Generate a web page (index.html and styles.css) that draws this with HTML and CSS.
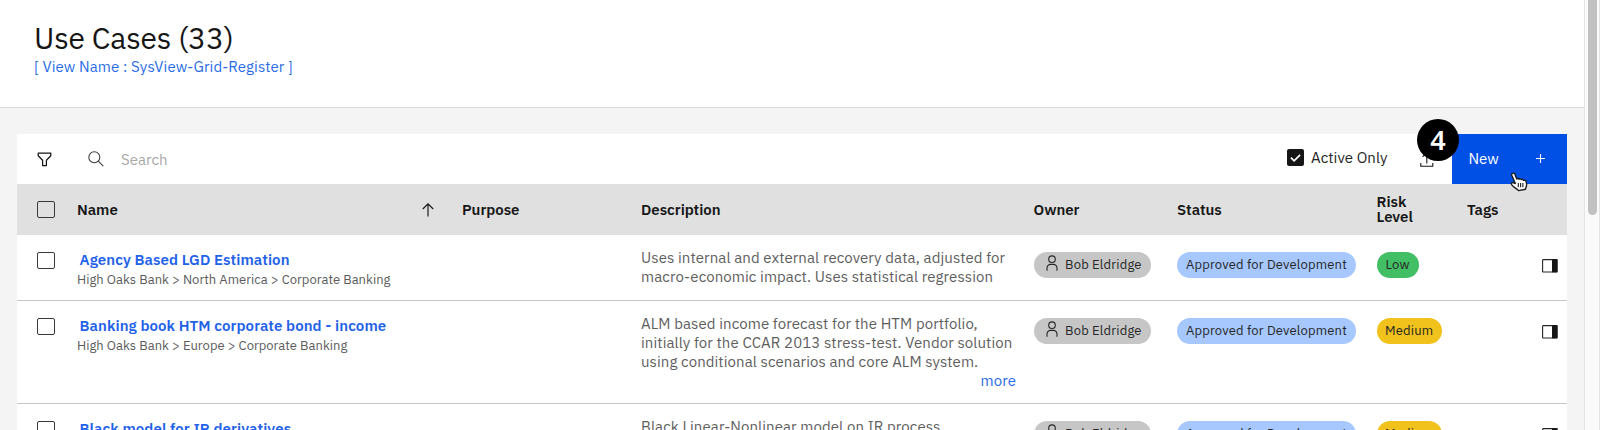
FILE: index.html
```html
<!DOCTYPE html>
<html lang="en">
<head>
<meta charset="utf-8">
<title>Use Cases</title>
<link rel="stylesheet" href="styles.css">
</head>
<body>
<svg class="defs" width="0" height="0">
  <symbol id="user" viewBox="0 0 12 16"><g fill="none" stroke="#262626" stroke-width="1.1"><circle cx="6" cy="4.2" r="3.3"/><path d="M1 15.800V13a3.600 3.600 0 0 1 3.600-3.600h2.800A3.600 3.600 0 0 1 11 13v2.800"/></g></symbol>
  <symbol id="panel" viewBox="0 0 16 14"><rect x=".6" y=".6" width="14.4" height="12.4" rx=".6" fill="#fff" stroke="#262626" stroke-width="1.1"/><path d="M10 .3h5.500v13H10z" fill="#161616"/></symbol>
</svg>
<div class="app">
  <div class="main">
    <header class="page-head">
      <h1>Use Cases (33)</h1>
      <a class="view">[ View Name : SysView-Grid-Register ]</a>
    </header>
    <section class="card">
      <div class="toolbar">
        <svg class="filter" width="15" height="15" viewBox="0 0 15 15"><path d="M1.200 1.200h12.600v2.500L9.400 8.200v5.300H5.600V8.200L1.200 3.700z" fill="none" stroke="#161616" stroke-width="1.250" stroke-linejoin="round"/></svg>
        <svg class="glass" width="16" height="16" viewBox="0 0 16 16"><g fill="none" stroke="#393939" stroke-width="1.050"><circle cx="6.300" cy="6.200" r="5.500"/><path d="M10.300 10.100l5 5"/></g></svg>
        <span class="search">Search</span>
        <span class="checked"><svg width="17" height="17" viewBox="0 0 17 17"><path d="M3.900 8.700l3.200 3.100 6-6" fill="none" stroke="#fff" stroke-width="1.700"/></svg></span>
        <span class="active">Active Only</span>
        <svg class="upload" width="14" height="16" viewBox="0 0 14 16"><path d="M.8 12v3.200h12V12M6.800 12.500V1.500M2.500 5.800l4.300-4.300 4.300 4.300" fill="none" stroke="#161616" stroke-width="1.100"/></svg>
        <button class="new"><span>New</span><svg width="9" height="9" viewBox="0 0 9 9"><path d="M4.500 0v9M0 4.500h9" stroke="#fff" stroke-width="1.100"/></svg></button>
        <span class="badge">4</span>
        <svg class="cursor" width="18" height="20" viewBox="0 0 18 20"><path d="M2.600 1.300c1-.5 1.900 0 2.300 1l1.900 4.600c.7-.6 1.700-.5 2.200.3.700-.6 1.800-.5 2.200.3.900-.4 1.900 0 2.300.9l.3-.1c1-.4 1.900.1 2.200 1 .6 1.700.8 3.300.4 4.900-.3 1.200-.8 2-.9 3l-7 1.400c-1-1.400-2.300-1.900-3.800-2.900-1.300-.9-2.700-2-3.300-3.400-.4-1.100.6-1.900 1.700-1.600l2.200.9L1.800 3.200c-.3-.8 0-1.600.8-1.900z" fill="#fff" stroke="#1c1c1c" stroke-width="1.400" stroke-linejoin="round"/><path d="M8.300 11v4.200M10.600 11v4.200M12.900 11v4.200" stroke="#1c1c1c" stroke-width="1.100"/></svg>
      </div>
      <div class="row head">
        <span class="check"></span>
        <div class="name-head"><span class="h">Name</span><svg width="12" height="14" viewBox="0 0 12 14"><path d="M6 13.500V1M.8 6L6 .9 11.200 6" fill="none" stroke="#161616" stroke-width="1.150"/></svg></div>
        <span class="h">Purpose</span>
        <span class="h">Description</span>
        <span class="h">Owner</span>
        <span class="h">Status</span>
        <span class="h risk">Risk<br>Level</span>
        <span class="h">Tags</span>
      </div>
      <div class="row first">
        <span class="check"></span>
        <div class="name"><a>Agency Based LGD Estimation</a><p>High Oaks Bank &gt; North America &gt; Corporate Banking</p></div>
        <span></span>
        <div class="desc"><p>Uses internal and external recovery data, adjusted for</p><p>macro-economic impact. Uses statistical regression</p></div>
        <div><span class="tag user"><svg width="12" height="16"><use href="#user"/></svg>Bob Eldridge</span></div>
        <div><span class="tag status">Approved for Development</span></div>
        <div><span class="tag low">Low</span></div>
        <svg class="panel" width="16" height="14"><use href="#panel"/></svg>
      </div>
      <div class="row second">
        <span class="check"></span>
        <div class="name"><a>Banking book HTM corporate bond - income</a><p>High Oaks Bank &gt; Europe &gt; Corporate Banking</p></div>
        <span></span>
        <div class="desc"><p>ALM based income forecast for the HTM portfolio,</p><p>initially for the CCAR 2013 stress-test. Vendor solution</p><p>using conditional scenarios and core ALM system.</p><a class="more">more</a></div>
        <div><span class="tag user"><svg width="12" height="16"><use href="#user"/></svg>Bob Eldridge</span></div>
        <div><span class="tag status">Approved for Development</span></div>
        <div><span class="tag medium">Medium</span></div>
        <svg class="panel" width="16" height="14"><use href="#panel"/></svg>
      </div>
      <div class="row third">
        <span class="check"></span>
        <div class="name"><a>Black model for IR derivatives</a></div>
        <span></span>
        <div class="desc"><p>Black Linear-Nonlinear model on IR process</p></div>
        <div><span class="tag user"><svg width="12" height="16"><use href="#user"/></svg>Bob Eldridge</span></div>
        <div><span class="tag status">Approved for Development</span></div>
        <div><span class="tag medium">Medium</span></div>
        <svg class="panel" width="16" height="14"><use href="#panel"/></svg>
      </div>
    </section>
  </div>
  <div class="scroll"><div class="thumb"></div></div>
</div>
</body>
</html>
```
FILE: styles.css
```css
* { box-sizing: border-box; }
body { margin: 0; font: 15px/19px "IBM Plex Sans", Roboto, sans-serif; color: #161616; background: #f4f4f4; overflow: hidden; }
p, h1 { margin: 0; }
.defs { position: absolute; }
.app { display: flex; width: 1600px; height: 430px; overflow: hidden; }
.main { width: 1584px; }
.page-head { height: 108px; background: #fff; border-bottom: 1px solid #dadada; padding: 19px 0 0 34px; }
h1 { font-size: 30px; line-height: 38px; font-weight: 400; letter-spacing: -.17px; }
.view { display: block; line-height: 19px; letter-spacing: .09px; color: #2a6ce6; }
.card { width: 1550px; margin: 25.500px 0 0 17px; background: #fff; }
.toolbar { position: relative; display: flex; align-items: flex-start; height: 50.500px; }
.filter { margin: 18px 0 0 19.500px; }
.glass { margin: 17.500px 0 0 36px; }
.search { margin: 16.500px 0 0 17.500px; color: #a8a8a8; width: 1165.500px; }
.checked { width: 17px; height: 17px; margin-top: 15.500px; border-radius: 2px; background: #161616; flex: none; }
.checked svg { display: block; }
.active { margin: 14.500px 0 0 7.500px; width: 77px; white-space: nowrap; color: #262626; letter-spacing: .06px; }
.upload { margin: 17px 0 0 31.500px; }
.new { position: absolute; right: 0; top: 0; width: 115px; height: 50.500px; border: 0; padding: 0 22.500px 0 16.500px; display: flex; align-items: center; justify-content: space-between; background: #0050e6; color: #fff; font: inherit; }
.badge { position: absolute; left: 1400px; top: -15px; width: 42px; height: 42px; border-radius: 50%; background: #000; color: #fff; font: 600 27px/42px "Noto Sans", sans-serif; text-align: center; }
.cursor { position: absolute; left: 1493px; top: 38px; }
.row { display: grid; grid-template-columns: 60px 385px 179px 392.500px 143.500px 199.500px 90.500px 1fr; align-items: start; border-bottom: 1px solid #c6c6c6; }
.row.head { height: 51px; background: #e0e0e0; border: 0; align-items: center; }
.first { height: 66px; }
.second { height: 103px; }
.third { height: 66px; }
.check { width: 18px; height: 17.500px; margin: 16.500px 0 0 20px; border: 1.500px solid #393939; border-radius: 2px; }
.head .check { margin-top: 0; }
.h { font-weight: 600; letter-spacing: -.03px; }
.risk { line-height: 14.500px; }
.name-head { display: flex; justify-content: space-between; align-items: center; padding-right: 28px; }
.name { padding-top: 15px; }
.name a { display: block; padding-left: 2.500px; line-height: 20px; font-weight: 600; letter-spacing: .085px; color: #1f62e8; }
.name p { font-size: 13px; line-height: 19px; letter-spacing: .015px; color: #5b5b5b; }
.desc { padding-top: 13.400px; color: #5e5e5e; white-space: nowrap; letter-spacing: .09px; width: 375px; }
.more { display: block; text-align: right; color: #2a6ce6; }
.tag { display: inline-flex; align-items: center; height: 25.500px; margin-top: 17px; border-radius: 13px; font-size: 13px; letter-spacing: .18px; white-space: nowrap; color: #262626; }
.user { width: 117px; padding-left: 12px; gap: 7.500px; background: #c6c6c6; }
.user svg { margin-top: -3px; }
.status { width: 178.500px; padding-left: 9px; background: #a6c8ff; }
.low { width: 42px; padding-left: 9px; background: #42be65; }
.medium { width: 65px; padding-left: 8.500px; background: #f1c21b; }
.panel { margin: 24px 0 0 75px; }
.scroll { width: 16px; height: 430px; background: #fafafa; border: solid #e4e4e4; border-width: 0 1px; padding-left: 3px; }
.thumb { width: 9px; height: 215px; border-radius: 0 0 5px 5px; background: #c1c1c1; }
```
